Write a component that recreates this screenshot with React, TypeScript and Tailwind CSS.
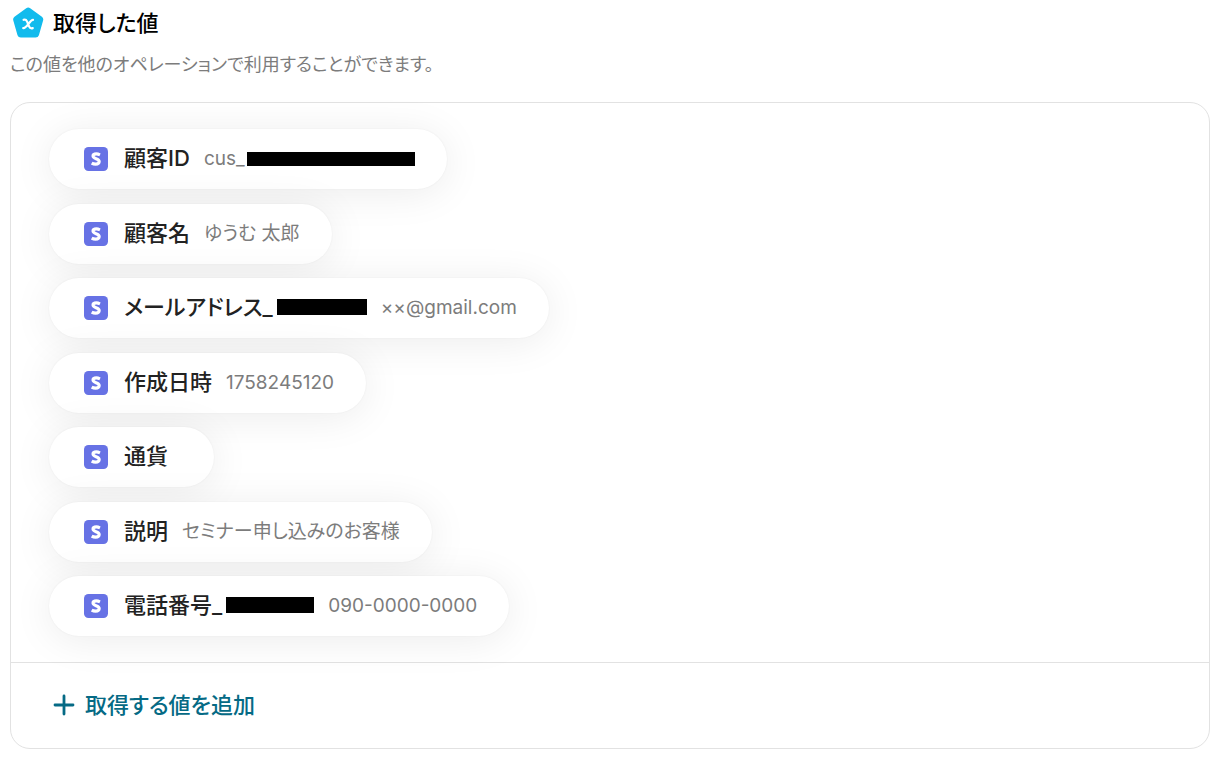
type Item = {
  label: string;
  labelMask?: string;
  value?: string;
  valueMask?: string;
};

const items: Item[] = [
  { label: "顧客ID", value: "cus_", valueMask: "w-[168px]" },
  { label: "顧客名", value: "ゆうむ 太郎" },
  { label: "メールアドレス_", labelMask: "w-[90px]", value: "××@gmail.com" },
  { label: "作成日時", value: "1758245120" },
  { label: "通貨", value: "" },
  { label: "説明", value: "セミナー申し込みのお客様" },
  { label: "電話番号_", labelMask: "w-[88px]", value: "090-0000-0000" },
];

function VariableIcon() {
  return (
    <svg className="size-8 shrink-0" viewBox="0 0 32 32" aria-hidden="true">
      <path
        d="M14.2 1.3Q16.2-.1 18.2 1.3L29.9 9.7Q31.8 11.1 31.1 13.4L26.9 28.2Q26.1 30.5 23.6 30.5H8.8Q6.3 30.5 5.5 28.2L1.3 13.4Q.6 11.1 2.5 9.7Z"
        fill="#12bbed"
      />
      <path
        d="M11.6 12.8C13.4 12.2 14.3 12.9 15 14.4L17.2 19.6Q18.2 21.9 20.8 21.1M21 12.8C18.2 12.5 14.8 21.5 11.2 21.1"
        fill="none"
        stroke="white"
        strokeWidth="2.2"
        strokeLinecap="round"
      />
    </svg>
  );
}

function ServiceIcon() {
  return (
    <svg className="size-6 shrink-0" viewBox="0 0 24 24" aria-hidden="true">
      <rect width="24" height="24" rx="4.5" fill="#6772e5" />
      <path
        d="M16 7.8Q14 6.9 12.4 6.9C10.2 6.9 9 7.6 9 9.1C9 12.3 15.2 11.1 15.2 14.5C15.2 16.2 13.8 17.1 11.6 17.1Q9.4 17.1 7.7 16.1"
        fill="none"
        stroke="white"
        strokeWidth="3.1"
      />
    </svg>
  );
}

function Chip({ item }: { item: Item }) {
  return (
    <li className="flex h-[60px] items-center rounded-full bg-white pr-8 pl-[35px] shadow-[0_4px_40px_rgba(0,0,0,0.08),0_0_2px_rgba(0,0,0,0.06)]">
      <ServiceIcon />
      <span className="ml-4 flex items-center pb-[2px] text-[22px] leading-8 font-medium text-[#222]">
        {item.label}
        {item.labelMask && <span className={`ml-1 h-4 bg-black ${item.labelMask}`} />}
      </span>
      <span className="ml-[14px] flex items-center text-[19px] leading-7 text-[#7c7c7c]">
        {item.value}
        {item.valueMask && <span className={`ml-[2px] h-[14px] bg-black ${item.valueMask}`} />}
      </span>
    </li>
  );
}

export default function App() {
  return (
    <main className="bg-white px-[10px] pt-[7px] pb-2 font-['Inter','Noto_Sans_CJK_JP',sans-serif] [font-feature-settings:'palt']">
      <header>
        <h1 className="flex items-center gap-[9px] pl-[2px] text-[22px] leading-8 font-medium text-black">
          <VariableIcon />
          取得した値
        </h1>
        <p className="mt-3 text-[18px] leading-7 text-[#7c7c7c]">
          この値を他のオペレーションで利用することができます。
        </p>
      </header>
      <section className="mt-[23px] rounded-[20px] border border-[#e2e2e2]">
        <ul className="flex min-h-[559px] flex-col items-start justify-between px-[38px] py-[26px]">
          {items.map((item) => (
            <Chip key={item.label} item={item} />
          ))}
        </ul>
        <div className="border-t border-[#e2e2e2] px-[42px] pt-[26px] pb-[27px]">
          <button type="button" className="flex items-center gap-[10px] text-[22px] leading-8 font-medium text-[#056a85]">
            <svg className="size-[22px]" viewBox="0 0 22 22" aria-hidden="true">
              <path d="M11 2V20M2 11H20" fill="none" stroke="currentColor" strokeWidth="2.8" strokeLinecap="round" />
            </svg>
            取得する値を追加
          </button>
        </div>
      </section>
    </main>
  );
}
